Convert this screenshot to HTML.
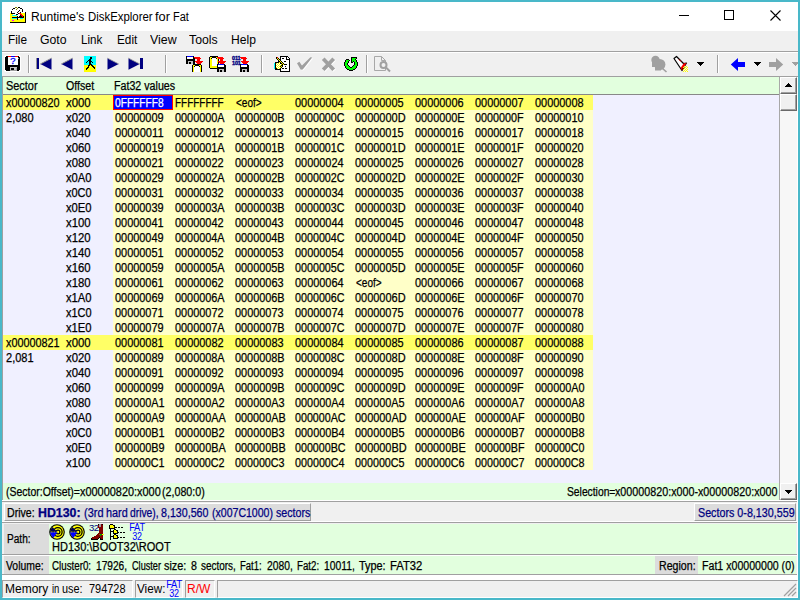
<!DOCTYPE html>
<html><head><meta charset="utf-8"><title>Runtime's DiskExplorer for Fat</title>
<style>
html,body{margin:0;padding:0;}
body{width:800px;height:600px;overflow:hidden;background:#49b8c9;position:relative;font-family:"Liberation Sans",sans-serif;}
.abs,.t,.s{position:absolute;}
.t{-webkit-text-stroke:.25px;font-size:12px;line-height:15px;height:15px;white-space:nowrap;color:#000;transform:scaleX(.915);transform-origin:0 0;}
.s{font-size:12px;line-height:16px;white-space:nowrap;color:#000;}
.navy{color:#000080;}
svg{position:absolute;overflow:visible;}
</style></head><body>

<div class="abs" style="left:2px;top:2px;width:796px;height:596px;background:#f0f0f0;"></div>
<div class="abs" style="left:2px;top:2px;width:796px;height:29px;background:#ffffff;"></div>
<div class="s" style="left:31.3px;top:8.5px;transform:scaleX(1.008);transform-origin:0 0;font-size:12px;">Runtime's</div>
<div class="s" style="left:87.6px;top:8.5px;transform:scaleX(0.950);transform-origin:0 0;font-size:12px;">DiskExplorer</div>
<div class="s" style="left:154.9px;top:8.5px;transform:scaleX(1.064);transform-origin:0 0;font-size:12px;">for</div>
<div class="s" style="left:173.0px;top:8.5px;transform:scaleX(0.917);transform-origin:0 0;font-size:12px;">Fat</div>
<div class="s" style="left:8.3px;top:32.4px;transform:scaleX(0.982);transform-origin:0 0;font-size:12px;">File</div>
<div class="s" style="left:40.2px;top:32.4px;transform:scaleX(1.022);transform-origin:0 0;font-size:12px;">Goto</div>
<div class="s" style="left:81.0px;top:32.4px;transform:scaleX(0.967);transform-origin:0 0;font-size:12px;">Link</div>
<div class="s" style="left:117.0px;top:32.4px;transform:scaleX(0.981);transform-origin:0 0;font-size:12px;">Edit</div>
<div class="s" style="left:149.7px;top:32.4px;transform:scaleX(1.031);transform-origin:0 0;font-size:12px;">View</div>
<div class="s" style="left:188.7px;top:32.4px;transform:scaleX(1.021);transform-origin:0 0;font-size:12px;">Tools</div>
<div class="s" style="left:231.4px;top:32.4px;transform:scaleX(1.009);transform-origin:0 0;font-size:12px;">Help</div>
<div class="abs" style="left:2px;top:51px;width:796px;height:1px;background:#a0a0a0;"></div>
<div class="abs" style="left:2px;top:52px;width:796px;height:1px;background:#ffffff;"></div>
<div class="abs" style="left:2px;top:76px;width:796px;height:1px;background:#a0a0a0;"></div>
<div class="abs" style="left:2px;top:77px;width:1px;height:424px;background:#a0a0a0;"></div>
<div class="abs" style="left:3px;top:77px;width:776px;height:17px;background:#e2ffde;"></div>
<div class="abs" style="left:3px;top:94px;width:776px;height:1px;background:#888888;"></div>
<div class="abs" style="left:3px;top:95px;width:776px;height:388px;background:#f0f0ff;"></div>
<div class="abs" style="left:113px;top:95px;width:480px;height:375px;background:#ffffc8;"></div>
<div class="abs" style="left:3px;top:95px;width:590px;height:15px;background:#ffff66;"></div>
<div class="abs" style="left:3px;top:335px;width:590px;height:15px;background:#ffff66;"></div>
<div class="abs" style="left:3px;top:483px;width:776px;height:17px;background:#e2ffde;"></div>
<div class="abs" style="left:2px;top:500px;width:796px;height:1px;background:#ffffff;"></div>
<div class="t" style="left:5.7px;top:79px;transform:scaleX(0.911);transform-origin:0 0;font-size:12px;">Sector</div>
<div class="t" style="left:65.7px;top:79px;transform:scaleX(0.884);transform-origin:0 0;font-size:12px;">Offset</div>
<div class="t" style="left:113.7px;top:79px;transform:scaleX(0.889);transform-origin:0 0;font-size:12px;">Fat32 values</div>
<div class="abs" style="left:113px;top:95px;width:60px;height:15px;background:#0000ff;box-sizing:border-box;border:1px solid #ff0000;"></div>
<div class="t" style="left:65.7px;top:96px;transform:scaleX(0.945);transform-origin:0 0;font-size:12px;">x000</div>
<div class="t" style="left:5.7px;top:96px;transform:scaleX(0.902);transform-origin:0 0;font-size:12px;">x00000820</div>
<div class="t" style="left:114.7px;top:96px;transform:scaleX(0.848);transform-origin:0 0;font-size:12px;color:#fff;">0FFFFFF8</div>
<div class="t" style="left:174.7px;top:96px;transform:scaleX(0.829);transform-origin:0 0;font-size:12px;">FFFFFFFF</div>
<div class="t" style="left:235.7px;top:96px;transform:scaleX(0.834);transform-origin:0 0;font-size:12px;">&lt;eof&gt;</div>
<div class="t" style="left:294.7px;top:96px;transform:scaleX(0.910);transform-origin:0 0;font-size:12px;">00000004</div>
<div class="t" style="left:354.7px;top:96px;transform:scaleX(0.910);transform-origin:0 0;font-size:12px;">00000005</div>
<div class="t" style="left:414.7px;top:96px;transform:scaleX(0.910);transform-origin:0 0;font-size:12px;">00000006</div>
<div class="t" style="left:474.7px;top:96px;transform:scaleX(0.910);transform-origin:0 0;font-size:12px;">00000007</div>
<div class="t" style="left:534.7px;top:96px;transform:scaleX(0.910);transform-origin:0 0;font-size:12px;">00000008</div>
<div class="t" style="left:65.7px;top:111px;transform:scaleX(0.945);transform-origin:0 0;font-size:12px;">x020</div>
<div class="t" style="left:5.7px;top:111px;transform:scaleX(0.919);transform-origin:0 0;font-size:12px;">2,080</div>
<div class="t" style="left:114.7px;top:111px;transform:scaleX(0.910);transform-origin:0 0;font-size:12px;">00000009</div>
<div class="t" style="left:174.7px;top:111px;transform:scaleX(0.906);transform-origin:0 0;font-size:12px;">0000000A</div>
<div class="t" style="left:234.7px;top:111px;transform:scaleX(0.906);transform-origin:0 0;font-size:12px;">0000000B</div>
<div class="t" style="left:294.7px;top:111px;transform:scaleX(0.895);transform-origin:0 0;font-size:12px;">0000000C</div>
<div class="t" style="left:354.7px;top:111px;transform:scaleX(0.913);transform-origin:0 0;font-size:12px;">0000000D</div>
<div class="t" style="left:414.7px;top:111px;transform:scaleX(0.906);transform-origin:0 0;font-size:12px;">0000000E</div>
<div class="t" style="left:474.7px;top:111px;transform:scaleX(0.899);transform-origin:0 0;font-size:12px;">0000000F</div>
<div class="t" style="left:534.7px;top:111px;transform:scaleX(0.910);transform-origin:0 0;font-size:12px;">00000010</div>
<div class="t" style="left:65.7px;top:126px;transform:scaleX(0.945);transform-origin:0 0;font-size:12px;">x040</div>
<div class="t" style="left:114.7px;top:126px;transform:scaleX(0.925);transform-origin:0 0;font-size:12px;">00000011</div>
<div class="t" style="left:174.7px;top:126px;transform:scaleX(0.910);transform-origin:0 0;font-size:12px;">00000012</div>
<div class="t" style="left:234.7px;top:126px;transform:scaleX(0.910);transform-origin:0 0;font-size:12px;">00000013</div>
<div class="t" style="left:294.7px;top:126px;transform:scaleX(0.910);transform-origin:0 0;font-size:12px;">00000014</div>
<div class="t" style="left:354.7px;top:126px;transform:scaleX(0.910);transform-origin:0 0;font-size:12px;">00000015</div>
<div class="t" style="left:414.7px;top:126px;transform:scaleX(0.910);transform-origin:0 0;font-size:12px;">00000016</div>
<div class="t" style="left:474.7px;top:126px;transform:scaleX(0.910);transform-origin:0 0;font-size:12px;">00000017</div>
<div class="t" style="left:534.7px;top:126px;transform:scaleX(0.910);transform-origin:0 0;font-size:12px;">00000018</div>
<div class="t" style="left:65.7px;top:141px;transform:scaleX(0.945);transform-origin:0 0;font-size:12px;">x060</div>
<div class="t" style="left:114.7px;top:141px;transform:scaleX(0.910);transform-origin:0 0;font-size:12px;">00000019</div>
<div class="t" style="left:174.7px;top:141px;transform:scaleX(0.906);transform-origin:0 0;font-size:12px;">0000001A</div>
<div class="t" style="left:234.7px;top:141px;transform:scaleX(0.906);transform-origin:0 0;font-size:12px;">0000001B</div>
<div class="t" style="left:294.7px;top:141px;transform:scaleX(0.895);transform-origin:0 0;font-size:12px;">0000001C</div>
<div class="t" style="left:354.7px;top:141px;transform:scaleX(0.913);transform-origin:0 0;font-size:12px;">0000001D</div>
<div class="t" style="left:414.7px;top:141px;transform:scaleX(0.906);transform-origin:0 0;font-size:12px;">0000001E</div>
<div class="t" style="left:474.7px;top:141px;transform:scaleX(0.899);transform-origin:0 0;font-size:12px;">0000001F</div>
<div class="t" style="left:534.7px;top:141px;transform:scaleX(0.910);transform-origin:0 0;font-size:12px;">00000020</div>
<div class="t" style="left:65.7px;top:156px;transform:scaleX(0.945);transform-origin:0 0;font-size:12px;">x080</div>
<div class="t" style="left:114.7px;top:156px;transform:scaleX(0.910);transform-origin:0 0;font-size:12px;">00000021</div>
<div class="t" style="left:174.7px;top:156px;transform:scaleX(0.910);transform-origin:0 0;font-size:12px;">00000022</div>
<div class="t" style="left:234.7px;top:156px;transform:scaleX(0.910);transform-origin:0 0;font-size:12px;">00000023</div>
<div class="t" style="left:294.7px;top:156px;transform:scaleX(0.910);transform-origin:0 0;font-size:12px;">00000024</div>
<div class="t" style="left:354.7px;top:156px;transform:scaleX(0.910);transform-origin:0 0;font-size:12px;">00000025</div>
<div class="t" style="left:414.7px;top:156px;transform:scaleX(0.910);transform-origin:0 0;font-size:12px;">00000026</div>
<div class="t" style="left:474.7px;top:156px;transform:scaleX(0.910);transform-origin:0 0;font-size:12px;">00000027</div>
<div class="t" style="left:534.7px;top:156px;transform:scaleX(0.910);transform-origin:0 0;font-size:12px;">00000028</div>
<div class="t" style="left:65.7px;top:171px;transform:scaleX(0.936);transform-origin:0 0;font-size:12px;">x0A0</div>
<div class="t" style="left:114.7px;top:171px;transform:scaleX(0.910);transform-origin:0 0;font-size:12px;">00000029</div>
<div class="t" style="left:174.7px;top:171px;transform:scaleX(0.906);transform-origin:0 0;font-size:12px;">0000002A</div>
<div class="t" style="left:234.7px;top:171px;transform:scaleX(0.906);transform-origin:0 0;font-size:12px;">0000002B</div>
<div class="t" style="left:294.7px;top:171px;transform:scaleX(0.895);transform-origin:0 0;font-size:12px;">0000002C</div>
<div class="t" style="left:354.7px;top:171px;transform:scaleX(0.913);transform-origin:0 0;font-size:12px;">0000002D</div>
<div class="t" style="left:414.7px;top:171px;transform:scaleX(0.906);transform-origin:0 0;font-size:12px;">0000002E</div>
<div class="t" style="left:474.7px;top:171px;transform:scaleX(0.899);transform-origin:0 0;font-size:12px;">0000002F</div>
<div class="t" style="left:534.7px;top:171px;transform:scaleX(0.910);transform-origin:0 0;font-size:12px;">00000030</div>
<div class="t" style="left:65.7px;top:186px;transform:scaleX(0.914);transform-origin:0 0;font-size:12px;">x0C0</div>
<div class="t" style="left:114.7px;top:186px;transform:scaleX(0.910);transform-origin:0 0;font-size:12px;">00000031</div>
<div class="t" style="left:174.7px;top:186px;transform:scaleX(0.910);transform-origin:0 0;font-size:12px;">00000032</div>
<div class="t" style="left:234.7px;top:186px;transform:scaleX(0.910);transform-origin:0 0;font-size:12px;">00000033</div>
<div class="t" style="left:294.7px;top:186px;transform:scaleX(0.910);transform-origin:0 0;font-size:12px;">00000034</div>
<div class="t" style="left:354.7px;top:186px;transform:scaleX(0.910);transform-origin:0 0;font-size:12px;">00000035</div>
<div class="t" style="left:414.7px;top:186px;transform:scaleX(0.910);transform-origin:0 0;font-size:12px;">00000036</div>
<div class="t" style="left:474.7px;top:186px;transform:scaleX(0.910);transform-origin:0 0;font-size:12px;">00000037</div>
<div class="t" style="left:534.7px;top:186px;transform:scaleX(0.910);transform-origin:0 0;font-size:12px;">00000038</div>
<div class="t" style="left:65.7px;top:201px;transform:scaleX(0.936);transform-origin:0 0;font-size:12px;">x0E0</div>
<div class="t" style="left:114.7px;top:201px;transform:scaleX(0.910);transform-origin:0 0;font-size:12px;">00000039</div>
<div class="t" style="left:174.7px;top:201px;transform:scaleX(0.906);transform-origin:0 0;font-size:12px;">0000003A</div>
<div class="t" style="left:234.7px;top:201px;transform:scaleX(0.906);transform-origin:0 0;font-size:12px;">0000003B</div>
<div class="t" style="left:294.7px;top:201px;transform:scaleX(0.895);transform-origin:0 0;font-size:12px;">0000003C</div>
<div class="t" style="left:354.7px;top:201px;transform:scaleX(0.913);transform-origin:0 0;font-size:12px;">0000003D</div>
<div class="t" style="left:414.7px;top:201px;transform:scaleX(0.906);transform-origin:0 0;font-size:12px;">0000003E</div>
<div class="t" style="left:474.7px;top:201px;transform:scaleX(0.899);transform-origin:0 0;font-size:12px;">0000003F</div>
<div class="t" style="left:534.7px;top:201px;transform:scaleX(0.910);transform-origin:0 0;font-size:12px;">00000040</div>
<div class="t" style="left:65.7px;top:216px;transform:scaleX(0.945);transform-origin:0 0;font-size:12px;">x100</div>
<div class="t" style="left:114.7px;top:216px;transform:scaleX(0.910);transform-origin:0 0;font-size:12px;">00000041</div>
<div class="t" style="left:174.7px;top:216px;transform:scaleX(0.910);transform-origin:0 0;font-size:12px;">00000042</div>
<div class="t" style="left:234.7px;top:216px;transform:scaleX(0.910);transform-origin:0 0;font-size:12px;">00000043</div>
<div class="t" style="left:294.7px;top:216px;transform:scaleX(0.910);transform-origin:0 0;font-size:12px;">00000044</div>
<div class="t" style="left:354.7px;top:216px;transform:scaleX(0.910);transform-origin:0 0;font-size:12px;">00000045</div>
<div class="t" style="left:414.7px;top:216px;transform:scaleX(0.910);transform-origin:0 0;font-size:12px;">00000046</div>
<div class="t" style="left:474.7px;top:216px;transform:scaleX(0.910);transform-origin:0 0;font-size:12px;">00000047</div>
<div class="t" style="left:534.7px;top:216px;transform:scaleX(0.910);transform-origin:0 0;font-size:12px;">00000048</div>
<div class="t" style="left:65.7px;top:231px;transform:scaleX(0.945);transform-origin:0 0;font-size:12px;">x120</div>
<div class="t" style="left:114.7px;top:231px;transform:scaleX(0.910);transform-origin:0 0;font-size:12px;">00000049</div>
<div class="t" style="left:174.7px;top:231px;transform:scaleX(0.906);transform-origin:0 0;font-size:12px;">0000004A</div>
<div class="t" style="left:234.7px;top:231px;transform:scaleX(0.906);transform-origin:0 0;font-size:12px;">0000004B</div>
<div class="t" style="left:294.7px;top:231px;transform:scaleX(0.895);transform-origin:0 0;font-size:12px;">0000004C</div>
<div class="t" style="left:354.7px;top:231px;transform:scaleX(0.913);transform-origin:0 0;font-size:12px;">0000004D</div>
<div class="t" style="left:414.7px;top:231px;transform:scaleX(0.906);transform-origin:0 0;font-size:12px;">0000004E</div>
<div class="t" style="left:474.7px;top:231px;transform:scaleX(0.899);transform-origin:0 0;font-size:12px;">0000004F</div>
<div class="t" style="left:534.7px;top:231px;transform:scaleX(0.910);transform-origin:0 0;font-size:12px;">00000050</div>
<div class="t" style="left:65.7px;top:246px;transform:scaleX(0.945);transform-origin:0 0;font-size:12px;">x140</div>
<div class="t" style="left:114.7px;top:246px;transform:scaleX(0.910);transform-origin:0 0;font-size:12px;">00000051</div>
<div class="t" style="left:174.7px;top:246px;transform:scaleX(0.910);transform-origin:0 0;font-size:12px;">00000052</div>
<div class="t" style="left:234.7px;top:246px;transform:scaleX(0.910);transform-origin:0 0;font-size:12px;">00000053</div>
<div class="t" style="left:294.7px;top:246px;transform:scaleX(0.910);transform-origin:0 0;font-size:12px;">00000054</div>
<div class="t" style="left:354.7px;top:246px;transform:scaleX(0.910);transform-origin:0 0;font-size:12px;">00000055</div>
<div class="t" style="left:414.7px;top:246px;transform:scaleX(0.910);transform-origin:0 0;font-size:12px;">00000056</div>
<div class="t" style="left:474.7px;top:246px;transform:scaleX(0.910);transform-origin:0 0;font-size:12px;">00000057</div>
<div class="t" style="left:534.7px;top:246px;transform:scaleX(0.910);transform-origin:0 0;font-size:12px;">00000058</div>
<div class="t" style="left:65.7px;top:261px;transform:scaleX(0.945);transform-origin:0 0;font-size:12px;">x160</div>
<div class="t" style="left:114.7px;top:261px;transform:scaleX(0.910);transform-origin:0 0;font-size:12px;">00000059</div>
<div class="t" style="left:174.7px;top:261px;transform:scaleX(0.906);transform-origin:0 0;font-size:12px;">0000005A</div>
<div class="t" style="left:234.7px;top:261px;transform:scaleX(0.906);transform-origin:0 0;font-size:12px;">0000005B</div>
<div class="t" style="left:294.7px;top:261px;transform:scaleX(0.895);transform-origin:0 0;font-size:12px;">0000005C</div>
<div class="t" style="left:354.7px;top:261px;transform:scaleX(0.913);transform-origin:0 0;font-size:12px;">0000005D</div>
<div class="t" style="left:414.7px;top:261px;transform:scaleX(0.906);transform-origin:0 0;font-size:12px;">0000005E</div>
<div class="t" style="left:474.7px;top:261px;transform:scaleX(0.899);transform-origin:0 0;font-size:12px;">0000005F</div>
<div class="t" style="left:534.7px;top:261px;transform:scaleX(0.910);transform-origin:0 0;font-size:12px;">00000060</div>
<div class="t" style="left:65.7px;top:276px;transform:scaleX(0.945);transform-origin:0 0;font-size:12px;">x180</div>
<div class="t" style="left:114.7px;top:276px;transform:scaleX(0.910);transform-origin:0 0;font-size:12px;">00000061</div>
<div class="t" style="left:174.7px;top:276px;transform:scaleX(0.910);transform-origin:0 0;font-size:12px;">00000062</div>
<div class="t" style="left:234.7px;top:276px;transform:scaleX(0.910);transform-origin:0 0;font-size:12px;">00000063</div>
<div class="t" style="left:294.7px;top:276px;transform:scaleX(0.910);transform-origin:0 0;font-size:12px;">00000064</div>
<div class="t" style="left:355.7px;top:276px;transform:scaleX(0.834);transform-origin:0 0;font-size:12px;">&lt;eof&gt;</div>
<div class="t" style="left:414.7px;top:276px;transform:scaleX(0.910);transform-origin:0 0;font-size:12px;">00000066</div>
<div class="t" style="left:474.7px;top:276px;transform:scaleX(0.910);transform-origin:0 0;font-size:12px;">00000067</div>
<div class="t" style="left:534.7px;top:276px;transform:scaleX(0.910);transform-origin:0 0;font-size:12px;">00000068</div>
<div class="t" style="left:65.7px;top:291px;transform:scaleX(0.936);transform-origin:0 0;font-size:12px;">x1A0</div>
<div class="t" style="left:114.7px;top:291px;transform:scaleX(0.910);transform-origin:0 0;font-size:12px;">00000069</div>
<div class="t" style="left:174.7px;top:291px;transform:scaleX(0.906);transform-origin:0 0;font-size:12px;">0000006A</div>
<div class="t" style="left:234.7px;top:291px;transform:scaleX(0.906);transform-origin:0 0;font-size:12px;">0000006B</div>
<div class="t" style="left:294.7px;top:291px;transform:scaleX(0.895);transform-origin:0 0;font-size:12px;">0000006C</div>
<div class="t" style="left:354.7px;top:291px;transform:scaleX(0.913);transform-origin:0 0;font-size:12px;">0000006D</div>
<div class="t" style="left:414.7px;top:291px;transform:scaleX(0.906);transform-origin:0 0;font-size:12px;">0000006E</div>
<div class="t" style="left:474.7px;top:291px;transform:scaleX(0.899);transform-origin:0 0;font-size:12px;">0000006F</div>
<div class="t" style="left:534.7px;top:291px;transform:scaleX(0.910);transform-origin:0 0;font-size:12px;">00000070</div>
<div class="t" style="left:65.7px;top:306px;transform:scaleX(0.914);transform-origin:0 0;font-size:12px;">x1C0</div>
<div class="t" style="left:114.7px;top:306px;transform:scaleX(0.910);transform-origin:0 0;font-size:12px;">00000071</div>
<div class="t" style="left:174.7px;top:306px;transform:scaleX(0.910);transform-origin:0 0;font-size:12px;">00000072</div>
<div class="t" style="left:234.7px;top:306px;transform:scaleX(0.910);transform-origin:0 0;font-size:12px;">00000073</div>
<div class="t" style="left:294.7px;top:306px;transform:scaleX(0.910);transform-origin:0 0;font-size:12px;">00000074</div>
<div class="t" style="left:354.7px;top:306px;transform:scaleX(0.910);transform-origin:0 0;font-size:12px;">00000075</div>
<div class="t" style="left:414.7px;top:306px;transform:scaleX(0.910);transform-origin:0 0;font-size:12px;">00000076</div>
<div class="t" style="left:474.7px;top:306px;transform:scaleX(0.910);transform-origin:0 0;font-size:12px;">00000077</div>
<div class="t" style="left:534.7px;top:306px;transform:scaleX(0.910);transform-origin:0 0;font-size:12px;">00000078</div>
<div class="t" style="left:65.7px;top:321px;transform:scaleX(0.936);transform-origin:0 0;font-size:12px;">x1E0</div>
<div class="t" style="left:114.7px;top:321px;transform:scaleX(0.910);transform-origin:0 0;font-size:12px;">00000079</div>
<div class="t" style="left:174.7px;top:321px;transform:scaleX(0.906);transform-origin:0 0;font-size:12px;">0000007A</div>
<div class="t" style="left:234.7px;top:321px;transform:scaleX(0.906);transform-origin:0 0;font-size:12px;">0000007B</div>
<div class="t" style="left:294.7px;top:321px;transform:scaleX(0.895);transform-origin:0 0;font-size:12px;">0000007C</div>
<div class="t" style="left:354.7px;top:321px;transform:scaleX(0.913);transform-origin:0 0;font-size:12px;">0000007D</div>
<div class="t" style="left:414.7px;top:321px;transform:scaleX(0.906);transform-origin:0 0;font-size:12px;">0000007E</div>
<div class="t" style="left:474.7px;top:321px;transform:scaleX(0.899);transform-origin:0 0;font-size:12px;">0000007F</div>
<div class="t" style="left:534.7px;top:321px;transform:scaleX(0.910);transform-origin:0 0;font-size:12px;">00000080</div>
<div class="t" style="left:65.7px;top:336px;transform:scaleX(0.945);transform-origin:0 0;font-size:12px;">x000</div>
<div class="t" style="left:5.7px;top:336px;transform:scaleX(0.902);transform-origin:0 0;font-size:12px;">x00000821</div>
<div class="t" style="left:114.7px;top:336px;transform:scaleX(0.910);transform-origin:0 0;font-size:12px;">00000081</div>
<div class="t" style="left:174.7px;top:336px;transform:scaleX(0.910);transform-origin:0 0;font-size:12px;">00000082</div>
<div class="t" style="left:234.7px;top:336px;transform:scaleX(0.910);transform-origin:0 0;font-size:12px;">00000083</div>
<div class="t" style="left:294.7px;top:336px;transform:scaleX(0.910);transform-origin:0 0;font-size:12px;">00000084</div>
<div class="t" style="left:354.7px;top:336px;transform:scaleX(0.910);transform-origin:0 0;font-size:12px;">00000085</div>
<div class="t" style="left:414.7px;top:336px;transform:scaleX(0.910);transform-origin:0 0;font-size:12px;">00000086</div>
<div class="t" style="left:474.7px;top:336px;transform:scaleX(0.910);transform-origin:0 0;font-size:12px;">00000087</div>
<div class="t" style="left:534.7px;top:336px;transform:scaleX(0.910);transform-origin:0 0;font-size:12px;">00000088</div>
<div class="t" style="left:65.7px;top:351px;transform:scaleX(0.945);transform-origin:0 0;font-size:12px;">x020</div>
<div class="t" style="left:5.7px;top:351px;transform:scaleX(0.919);transform-origin:0 0;font-size:12px;">2,081</div>
<div class="t" style="left:114.7px;top:351px;transform:scaleX(0.910);transform-origin:0 0;font-size:12px;">00000089</div>
<div class="t" style="left:174.7px;top:351px;transform:scaleX(0.906);transform-origin:0 0;font-size:12px;">0000008A</div>
<div class="t" style="left:234.7px;top:351px;transform:scaleX(0.906);transform-origin:0 0;font-size:12px;">0000008B</div>
<div class="t" style="left:294.7px;top:351px;transform:scaleX(0.895);transform-origin:0 0;font-size:12px;">0000008C</div>
<div class="t" style="left:354.7px;top:351px;transform:scaleX(0.913);transform-origin:0 0;font-size:12px;">0000008D</div>
<div class="t" style="left:414.7px;top:351px;transform:scaleX(0.906);transform-origin:0 0;font-size:12px;">0000008E</div>
<div class="t" style="left:474.7px;top:351px;transform:scaleX(0.899);transform-origin:0 0;font-size:12px;">0000008F</div>
<div class="t" style="left:534.7px;top:351px;transform:scaleX(0.910);transform-origin:0 0;font-size:12px;">00000090</div>
<div class="t" style="left:65.7px;top:366px;transform:scaleX(0.945);transform-origin:0 0;font-size:12px;">x040</div>
<div class="t" style="left:114.7px;top:366px;transform:scaleX(0.910);transform-origin:0 0;font-size:12px;">00000091</div>
<div class="t" style="left:174.7px;top:366px;transform:scaleX(0.910);transform-origin:0 0;font-size:12px;">00000092</div>
<div class="t" style="left:234.7px;top:366px;transform:scaleX(0.910);transform-origin:0 0;font-size:12px;">00000093</div>
<div class="t" style="left:294.7px;top:366px;transform:scaleX(0.910);transform-origin:0 0;font-size:12px;">00000094</div>
<div class="t" style="left:354.7px;top:366px;transform:scaleX(0.910);transform-origin:0 0;font-size:12px;">00000095</div>
<div class="t" style="left:414.7px;top:366px;transform:scaleX(0.910);transform-origin:0 0;font-size:12px;">00000096</div>
<div class="t" style="left:474.7px;top:366px;transform:scaleX(0.910);transform-origin:0 0;font-size:12px;">00000097</div>
<div class="t" style="left:534.7px;top:366px;transform:scaleX(0.910);transform-origin:0 0;font-size:12px;">00000098</div>
<div class="t" style="left:65.7px;top:381px;transform:scaleX(0.945);transform-origin:0 0;font-size:12px;">x060</div>
<div class="t" style="left:114.7px;top:381px;transform:scaleX(0.910);transform-origin:0 0;font-size:12px;">00000099</div>
<div class="t" style="left:174.7px;top:381px;transform:scaleX(0.906);transform-origin:0 0;font-size:12px;">0000009A</div>
<div class="t" style="left:234.7px;top:381px;transform:scaleX(0.906);transform-origin:0 0;font-size:12px;">0000009B</div>
<div class="t" style="left:294.7px;top:381px;transform:scaleX(0.895);transform-origin:0 0;font-size:12px;">0000009C</div>
<div class="t" style="left:354.7px;top:381px;transform:scaleX(0.913);transform-origin:0 0;font-size:12px;">0000009D</div>
<div class="t" style="left:414.7px;top:381px;transform:scaleX(0.906);transform-origin:0 0;font-size:12px;">0000009E</div>
<div class="t" style="left:474.7px;top:381px;transform:scaleX(0.899);transform-origin:0 0;font-size:12px;">0000009F</div>
<div class="t" style="left:534.7px;top:381px;transform:scaleX(0.906);transform-origin:0 0;font-size:12px;">000000A0</div>
<div class="t" style="left:65.7px;top:396px;transform:scaleX(0.945);transform-origin:0 0;font-size:12px;">x080</div>
<div class="t" style="left:114.7px;top:396px;transform:scaleX(0.906);transform-origin:0 0;font-size:12px;">000000A1</div>
<div class="t" style="left:174.7px;top:396px;transform:scaleX(0.906);transform-origin:0 0;font-size:12px;">000000A2</div>
<div class="t" style="left:234.7px;top:396px;transform:scaleX(0.906);transform-origin:0 0;font-size:12px;">000000A3</div>
<div class="t" style="left:294.7px;top:396px;transform:scaleX(0.906);transform-origin:0 0;font-size:12px;">000000A4</div>
<div class="t" style="left:354.7px;top:396px;transform:scaleX(0.906);transform-origin:0 0;font-size:12px;">000000A5</div>
<div class="t" style="left:414.7px;top:396px;transform:scaleX(0.906);transform-origin:0 0;font-size:12px;">000000A6</div>
<div class="t" style="left:474.7px;top:396px;transform:scaleX(0.906);transform-origin:0 0;font-size:12px;">000000A7</div>
<div class="t" style="left:534.7px;top:396px;transform:scaleX(0.906);transform-origin:0 0;font-size:12px;">000000A8</div>
<div class="t" style="left:65.7px;top:411px;transform:scaleX(0.936);transform-origin:0 0;font-size:12px;">x0A0</div>
<div class="t" style="left:114.7px;top:411px;transform:scaleX(0.906);transform-origin:0 0;font-size:12px;">000000A9</div>
<div class="t" style="left:174.7px;top:411px;transform:scaleX(0.903);transform-origin:0 0;font-size:12px;">000000AA</div>
<div class="t" style="left:234.7px;top:411px;transform:scaleX(0.903);transform-origin:0 0;font-size:12px;">000000AB</div>
<div class="t" style="left:294.7px;top:411px;transform:scaleX(0.892);transform-origin:0 0;font-size:12px;">000000AC</div>
<div class="t" style="left:354.7px;top:411px;transform:scaleX(0.910);transform-origin:0 0;font-size:12px;">000000AD</div>
<div class="t" style="left:414.7px;top:411px;transform:scaleX(0.903);transform-origin:0 0;font-size:12px;">000000AE</div>
<div class="t" style="left:474.7px;top:411px;transform:scaleX(0.895);transform-origin:0 0;font-size:12px;">000000AF</div>
<div class="t" style="left:534.7px;top:411px;transform:scaleX(0.906);transform-origin:0 0;font-size:12px;">000000B0</div>
<div class="t" style="left:65.7px;top:426px;transform:scaleX(0.914);transform-origin:0 0;font-size:12px;">x0C0</div>
<div class="t" style="left:114.7px;top:426px;transform:scaleX(0.906);transform-origin:0 0;font-size:12px;">000000B1</div>
<div class="t" style="left:174.7px;top:426px;transform:scaleX(0.906);transform-origin:0 0;font-size:12px;">000000B2</div>
<div class="t" style="left:234.7px;top:426px;transform:scaleX(0.906);transform-origin:0 0;font-size:12px;">000000B3</div>
<div class="t" style="left:294.7px;top:426px;transform:scaleX(0.906);transform-origin:0 0;font-size:12px;">000000B4</div>
<div class="t" style="left:354.7px;top:426px;transform:scaleX(0.906);transform-origin:0 0;font-size:12px;">000000B5</div>
<div class="t" style="left:414.7px;top:426px;transform:scaleX(0.906);transform-origin:0 0;font-size:12px;">000000B6</div>
<div class="t" style="left:474.7px;top:426px;transform:scaleX(0.906);transform-origin:0 0;font-size:12px;">000000B7</div>
<div class="t" style="left:534.7px;top:426px;transform:scaleX(0.906);transform-origin:0 0;font-size:12px;">000000B8</div>
<div class="t" style="left:65.7px;top:441px;transform:scaleX(0.936);transform-origin:0 0;font-size:12px;">x0E0</div>
<div class="t" style="left:114.7px;top:441px;transform:scaleX(0.906);transform-origin:0 0;font-size:12px;">000000B9</div>
<div class="t" style="left:174.7px;top:441px;transform:scaleX(0.903);transform-origin:0 0;font-size:12px;">000000BA</div>
<div class="t" style="left:234.7px;top:441px;transform:scaleX(0.903);transform-origin:0 0;font-size:12px;">000000BB</div>
<div class="t" style="left:294.7px;top:441px;transform:scaleX(0.892);transform-origin:0 0;font-size:12px;">000000BC</div>
<div class="t" style="left:354.7px;top:441px;transform:scaleX(0.910);transform-origin:0 0;font-size:12px;">000000BD</div>
<div class="t" style="left:414.7px;top:441px;transform:scaleX(0.903);transform-origin:0 0;font-size:12px;">000000BE</div>
<div class="t" style="left:474.7px;top:441px;transform:scaleX(0.895);transform-origin:0 0;font-size:12px;">000000BF</div>
<div class="t" style="left:534.7px;top:441px;transform:scaleX(0.895);transform-origin:0 0;font-size:12px;">000000C0</div>
<div class="t" style="left:65.7px;top:456px;transform:scaleX(0.945);transform-origin:0 0;font-size:12px;">x100</div>
<div class="t" style="left:114.7px;top:456px;transform:scaleX(0.895);transform-origin:0 0;font-size:12px;">000000C1</div>
<div class="t" style="left:174.7px;top:456px;transform:scaleX(0.895);transform-origin:0 0;font-size:12px;">000000C2</div>
<div class="t" style="left:234.7px;top:456px;transform:scaleX(0.895);transform-origin:0 0;font-size:12px;">000000C3</div>
<div class="t" style="left:294.7px;top:456px;transform:scaleX(0.895);transform-origin:0 0;font-size:12px;">000000C4</div>
<div class="t" style="left:354.7px;top:456px;transform:scaleX(0.895);transform-origin:0 0;font-size:12px;">000000C5</div>
<div class="t" style="left:414.7px;top:456px;transform:scaleX(0.895);transform-origin:0 0;font-size:12px;">000000C6</div>
<div class="t" style="left:474.7px;top:456px;transform:scaleX(0.895);transform-origin:0 0;font-size:12px;">000000C7</div>
<div class="t" style="left:534.7px;top:456px;transform:scaleX(0.895);transform-origin:0 0;font-size:12px;">000000C8</div>
<div class="t" style="left:5.7px;top:485px;transform:scaleX(0.872);transform-origin:0 0;font-size:12px;">(Sector:Offset)=</div>
<div class="t" style="left:79.5px;top:485px;transform:scaleX(0.910);transform-origin:0 0;font-size:12px;">x00000820:x000</div>
<div class="t" style="left:162.0px;top:485px;transform:scaleX(0.891);transform-origin:0 0;font-size:12px;">(2,080:0)</div>
<div class="t" style="left:566.9px;top:485px;transform:scaleX(0.858);transform-origin:0 0;font-size:12px;">Selection=</div>
<div class="t" style="left:615.3px;top:485px;transform:scaleX(0.895);transform-origin:0 0;font-size:12px;">x00000820:x000-x00000820:x000</div>
<div class="abs" style="left:779px;top:77px;width:1px;height:423px;background:#a8a8a8;"></div>
<div class="abs" style="left:780px;top:77px;width:17px;height:423px;background:#f7f7f7;"></div>
<div class="abs" style="left:780px;top:77px;width:17px;height:17px;background:#f0f0f0;box-sizing:border-box;border:1px solid;border-color:#fff #696969 #696969 #fff;box-shadow:inset -1px -1px 0 #a0a0a0;"></div>
<div class="abs" style="left:780px;top:94px;width:17px;height:17px;background:#f0f0f0;box-sizing:border-box;border:1px solid;border-color:#fff #696969 #696969 #fff;box-shadow:inset -1px -1px 0 #a0a0a0;"></div>
<div class="abs" style="left:780px;top:483px;width:17px;height:17px;background:#f0f0f0;box-sizing:border-box;border:1px solid;border-color:#fff #696969 #696969 #fff;box-shadow:inset -1px -1px 0 #a0a0a0;"></div>
<svg style="left:785px;top:83px" width="7" height="4" viewBox="0 0 7 4" shape-rendering="crispEdges"><path d="M3 0h1v1h1v1h1v1h1v1h-7v-1h1v-1h1v-1h1z" fill="#000"/></svg>
<svg style="left:785px;top:490px" width="7" height="4" viewBox="0 0 7 4" shape-rendering="crispEdges"><path d="M0 0h7v1h-1v1h-1v1h-1v1h-1v-1h-1v-1h-1v-1h-1z" fill="#000"/></svg>
<div class="abs" style="left:797px;top:77px;width:1px;height:521px;background:#ffffff;"></div>
<div class="abs" style="left:2px;top:501px;width:795px;height:1px;background:#a0a0a0;"></div>
<div class="abs" style="left:4px;top:503px;width:307px;height:18px;background:#dcdcdc;box-sizing:border-box;border:1px solid;border-color:#fff #a0a0a0 #a0a0a0 #fff;"></div>
<div class="t" style="left:6.7px;top:506px;transform:scaleX(0.881);transform-origin:0 0;font-size:12px;">Drive:</div>
<div class="t" style="left:37.7px;top:506px;transform:scaleX(1.030);transform-origin:0 0;font-size:12px;font-weight:bold;color:#000080;">HD130:</div>
<div class="t" style="left:84.3px;top:506px;transform:scaleX(0.914);transform-origin:0 0;font-size:12px;color:#000080;">(3rd</div>
<div class="t" style="left:106.1px;top:506px;transform:scaleX(0.903);transform-origin:0 0;font-size:12px;color:#000080;">hard</div>
<div class="t" style="left:130.1px;top:506px;transform:scaleX(0.858);transform-origin:0 0;font-size:12px;color:#000080;">drive),</div>
<div class="t" style="left:161.3px;top:506px;transform:scaleX(0.889);transform-origin:0 0;font-size:12px;color:#000080;">8,130,560</div>
<div class="t" style="left:211.7px;top:506px;transform:scaleX(0.879);transform-origin:0 0;font-size:12px;color:#000080;">(x007C1000)</div>
<div class="t" style="left:276.2px;top:506px;transform:scaleX(0.889);transform-origin:0 0;font-size:12px;color:#000080;">sectors</div>
<div class="abs" style="left:694px;top:503px;width:102px;height:18px;background:#dcdcdc;box-sizing:border-box;border:1px solid;border-color:#fff #a0a0a0 #a0a0a0 #fff;"></div>
<div class="t" style="left:697.7px;top:506px;transform:scaleX(0.894);transform-origin:0 0;font-size:12px;color:#000080;">Sectors 0-8,130,559</div>
<div class="abs" style="left:2px;top:521px;width:795px;height:1px;background:#ffffff;"></div>
<div class="abs" style="left:2px;top:522px;width:795px;height:1px;background:#a0a0a0;"></div>
<div class="abs" style="left:4px;top:524px;width:792px;height:30px;background:#e2ffde;"></div>
<div class="abs" style="left:4px;top:524px;width:45px;height:30px;background:#dcdcdc;"></div>
<div class="t" style="left:6.7px;top:532px;transform:scaleX(0.842);transform-origin:0 0;font-size:12px;">Path:</div>
<div class="t" style="left:51.7px;top:540px;transform:scaleX(0.917);transform-origin:0 0;font-size:12px;">HD130:\BOOT32\ROOT</div>
<div class="abs" style="left:2px;top:554px;width:795px;height:1px;background:#a0a0a0;"></div>
<div class="abs" style="left:2px;top:555px;width:795px;height:1px;background:#ffffff;"></div>
<div class="abs" style="left:4px;top:556px;width:792px;height:18px;background:#e2ffde;"></div>
<div class="abs" style="left:4px;top:556px;width:45px;height:18px;background:#dcdcdc;"></div>
<div class="t" style="left:6.2px;top:559px;transform:scaleX(0.867);transform-origin:0 0;font-size:12px;">Volume:</div>
<div class="t" style="left:52.2px;top:559px;transform:scaleX(0.814);transform-origin:0 0;font-size:12px;">Cluster0:</div>
<div class="t" style="left:95.7px;top:559px;transform:scaleX(0.847);transform-origin:0 0;font-size:12px;">17926,</div>
<div class="t" style="left:131.5px;top:559px;transform:scaleX(0.763);transform-origin:0 0;font-size:12px;">Cluster</div>
<div class="t" style="left:164.0px;top:559px;transform:scaleX(0.904);transform-origin:0 0;font-size:12px;">size:</div>
<div class="t" style="left:191.2px;top:559px;transform:scaleX(0.884);transform-origin:0 0;font-size:12px;">8</div>
<div class="t" style="left:200.7px;top:559px;transform:scaleX(0.828);transform-origin:0 0;font-size:12px;">sectors,</div>
<div class="t" style="left:239.7px;top:559px;transform:scaleX(0.790);transform-origin:0 0;font-size:12px;">Fat1:</div>
<div class="t" style="left:266.7px;top:559px;transform:scaleX(0.859);transform-origin:0 0;font-size:12px;">2080,</div>
<div class="t" style="left:296.7px;top:559px;transform:scaleX(0.808);transform-origin:0 0;font-size:12px;">Fat2:</div>
<div class="t" style="left:324.2px;top:559px;transform:scaleX(0.860);transform-origin:0 0;font-size:12px;">10011,</div>
<div class="t" style="left:359.2px;top:559px;transform:scaleX(0.906);transform-origin:0 0;font-size:12px;">Type:</div>
<div class="t" style="left:390.2px;top:559px;transform:scaleX(0.937);transform-origin:0 0;font-size:12px;">FAT32</div>
<div class="abs" style="left:655px;top:556px;width:43px;height:18px;background:#dcdcdc;"></div>
<div class="t" style="left:658.7px;top:559px;transform:scaleX(0.885);transform-origin:0 0;font-size:12px;">Region:</div>
<div class="t" style="left:701.7px;top:559px;transform:scaleX(0.884);transform-origin:0 0;font-size:12px;">Fat1 x00000000 (0)</div>
<div class="abs" style="left:2px;top:574px;width:795px;height:1px;background:#a0a0a0;"></div>
<div class="abs" style="left:2px;top:575px;width:796px;height:5px;background:#ffffff;"></div>
<div class="abs" style="left:2px;top:580px;width:796px;height:18px;background:#f0f0f0;"></div>
<div class="abs" style="left:2px;top:580px;width:131px;height:18px;background:#f0f0f0;box-sizing:border-box;border:1px solid;border-color:#a0a0a0 #fff #fff #a0a0a0;"></div>
<div class="abs" style="left:135px;top:580px;width:48px;height:18px;background:#f0f0f0;box-sizing:border-box;border:1px solid;border-color:#a0a0a0 #fff #fff #a0a0a0;"></div>
<div class="abs" style="left:185px;top:580px;width:30px;height:18px;background:#f0f0f0;box-sizing:border-box;border:1px solid;border-color:#a0a0a0 #fff #fff #a0a0a0;"></div>
<div class="abs" style="left:217px;top:580px;width:581px;height:18px;background:#f0f0f0;box-sizing:border-box;border:1px solid;border-color:#a0a0a0 #fff #fff #a0a0a0;"></div>
<div class="s" style="left:4.5px;top:581px;transform:scaleX(0.999);transform-origin:0 0;font-size:12px;">Memory</div>
<div class="s" style="left:51.5px;top:581px;transform:scaleX(0.792);transform-origin:0 0;font-size:12px;">in</div>
<div class="s" style="left:62.1px;top:581px;transform:scaleX(0.908);transform-origin:0 0;font-size:12px;">use:</div>
<div class="s" style="left:89.1px;top:581px;transform:scaleX(0.911);transform-origin:0 0;font-size:12px;">794728</div>
<div class="s" style="left:137.2px;top:581px;transform:scaleX(0.975);transform-origin:0 0;font-size:12px;">View:</div>
<div class="s" style="left:187.3px;top:581px;transform:scaleX(1.003);transform-origin:0 0;font-size:12px;color:#ff0000;">R/W</div>
<div class="abs" style="left:164.5px;top:580px;width:18px;font-size:10.5px;line-height:9px;color:#0000ff;text-align:center;letter-spacing:-.2px;transform:scaleX(.88);transform-origin:50% 0;">FAT</div>
<div class="abs" style="left:164.5px;top:588.5px;width:18px;font-size:10px;line-height:9px;color:#0000ff;text-align:center;letter-spacing:-.3px;transform:scaleX(.9);transform-origin:50% 0;">32</div>
<div class="abs" style="left:128px;top:523px;width:18px;font-size:10.5px;line-height:9px;color:#0000ff;text-align:center;letter-spacing:-.2px;transform:scaleX(.88);transform-origin:50% 0;">FAT</div>
<div class="abs" style="left:128px;top:531.5px;width:18px;font-size:10px;line-height:9px;color:#0000ff;text-align:center;letter-spacing:-.3px;transform:scaleX(.9);transform-origin:50% 0;">32</div>
<svg style="left:783px;top:583px" width="14" height="14" viewBox="0 0 14 14"><path d="M13 1L1 13M13 5L5 13M13 9L9 13" stroke="#a0a0a0" stroke-width="1.2" fill="none"/></svg>
<div class="abs" style="left:679px;top:15px;width:10px;height:1px;background:#000;"></div>
<div class="abs" style="left:724px;top:10px;width:10px;height:10px;background:transparent;box-sizing:border-box;border:1px solid #000;"></div>
<svg style="left:770px;top:10px" width="11" height="11" viewBox="0 0 11 11"><path d="M0.5 0.5L10.5 10.5M10.5 0.5L0.5 10.5" stroke="#000" stroke-width="1.1" fill="none"/></svg>
<svg style="left:10px;top:7px" width="16" height="16" viewBox="0 0 16 16" shape-rendering="crispEdges"><rect x="5" y="0" width="2" height="1" fill="#808000"/><rect x="8" y="0" width="2" height="1" fill="#000"/><rect x="3" y="1" width="2" height="1" fill="#000"/><rect x="5" y="1" width="2" height="1" fill="#fff"/><rect x="7" y="1" width="1" height="1" fill="#808000"/><rect x="8" y="1" width="2" height="1" fill="#fff"/><rect x="10" y="1" width="2" height="1" fill="#000"/><rect x="2" y="2" width="1" height="1" fill="#000"/><rect x="3" y="2" width="3" height="1" fill="#fff"/><rect x="6" y="2" width="1" height="1" fill="#808000"/><rect x="7" y="2" width="5" height="1" fill="#fff"/><rect x="12" y="2" width="1" height="1" fill="#000"/><rect x="1" y="3" width="8" height="1" fill="#fff"/><rect x="9" y="3" width="1" height="1" fill="#000"/><rect x="10" y="3" width="2" height="1" fill="#fff"/><rect x="12" y="3" width="1" height="1" fill="#000"/><rect x="1" y="4" width="1" height="1" fill="#000"/><rect x="2" y="4" width="6" height="1" fill="#fff"/><rect x="8" y="4" width="1" height="1" fill="#000"/><rect x="9" y="4" width="3" height="1" fill="#fff"/><rect x="12" y="4" width="1" height="1" fill="#000"/><rect x="1" y="5" width="1" height="1" fill="#000"/><rect x="2" y="5" width="5" height="1" fill="#fff"/><rect x="7" y="5" width="1" height="1" fill="#000"/><rect x="8" y="5" width="2" height="1" fill="#fff"/><rect x="10" y="5" width="1" height="1" fill="#000"/><rect x="15" y="5" width="1" height="1" fill="#000"/><rect x="0" y="6" width="1" height="1" fill="#ffff00"/><rect x="1" y="6" width="4" height="1" fill="#000"/><rect x="5" y="6" width="3" height="1" fill="#fff"/><rect x="8" y="6" width="1" height="1" fill="#000"/><rect x="9" y="6" width="2" height="1" fill="#ff0000"/><rect x="11" y="6" width="4" height="1" fill="#ffff00"/><rect x="15" y="6" width="1" height="1" fill="#000"/><rect x="0" y="7" width="3" height="1" fill="#ffff00"/><rect x="3" y="7" width="3" height="1" fill="#fff"/><rect x="6" y="7" width="2" height="1" fill="#000"/><rect x="8" y="7" width="2" height="1" fill="#fff"/><rect x="10" y="7" width="2" height="1" fill="#ff0000"/><rect x="12" y="7" width="3" height="1" fill="#ffff00"/><rect x="15" y="7" width="1" height="1" fill="#000"/><rect x="0" y="8" width="2" height="1" fill="#ffff00"/><rect x="2" y="8" width="5" height="1" fill="#00ffff"/><rect x="7" y="8" width="3" height="1" fill="#fff"/><rect x="10" y="8" width="1" height="1" fill="#000"/><rect x="11" y="8" width="2" height="1" fill="#ff0000"/><rect x="13" y="8" width="2" height="1" fill="#ffff00"/><rect x="15" y="8" width="1" height="1" fill="#000"/><rect x="0" y="9" width="7" height="1" fill="#ffff00"/><rect x="7" y="9" width="1" height="1" fill="#000"/><rect x="8" y="9" width="1" height="1" fill="#fff"/><rect x="9" y="9" width="3" height="1" fill="#000"/><rect x="12" y="9" width="1" height="1" fill="#ff0000"/><rect x="13" y="9" width="1" height="1" fill="#000"/><rect x="14" y="9" width="1" height="1" fill="#ffff00"/><rect x="15" y="9" width="1" height="1" fill="#000"/><rect x="0" y="10" width="2" height="1" fill="#ffff00"/><rect x="2" y="10" width="12" height="1" fill="#000"/><rect x="14" y="10" width="1" height="1" fill="#ffff00"/><rect x="15" y="10" width="1" height="1" fill="#000"/><rect x="0" y="11" width="2" height="1" fill="#ffff00"/><rect x="2" y="11" width="5" height="1" fill="#00ffff"/><rect x="7" y="11" width="1" height="1" fill="#000"/><rect x="8" y="11" width="2" height="1" fill="#fff"/><rect x="10" y="11" width="3" height="1" fill="#00ffff"/><rect x="13" y="11" width="2" height="1" fill="#ffff00"/><rect x="15" y="11" width="1" height="1" fill="#000"/><rect x="0" y="12" width="7" height="1" fill="#ffff00"/><rect x="7" y="12" width="1" height="1" fill="#000"/><rect x="8" y="12" width="7" height="1" fill="#ffff00"/><rect x="15" y="12" width="1" height="1" fill="#000"/><rect x="0" y="13" width="2" height="1" fill="#ffff00"/><rect x="2" y="13" width="2" height="1" fill="#ff00ff"/><rect x="4" y="13" width="11" height="1" fill="#ffff00"/><rect x="15" y="13" width="1" height="1" fill="#000"/><rect x="0" y="14" width="15" height="1" fill="#ffff00"/><rect x="15" y="14" width="1" height="1" fill="#000"/><rect x="0" y="15" width="16" height="1" fill="#000"/></svg>
<div class="abs" style="left:28px;top:55px;width:1px;height:18px;background:#a0a0a0;"></div>
<div class="abs" style="left:29px;top:55px;width:1px;height:18px;background:#ffffff;"></div>
<div class="abs" style="left:165px;top:55px;width:1px;height:18px;background:#a0a0a0;"></div>
<div class="abs" style="left:166px;top:55px;width:1px;height:18px;background:#ffffff;"></div>
<div class="abs" style="left:261px;top:55px;width:1px;height:18px;background:#a0a0a0;"></div>
<div class="abs" style="left:262px;top:55px;width:1px;height:18px;background:#ffffff;"></div>
<div class="abs" style="left:366px;top:55px;width:1px;height:18px;background:#a0a0a0;"></div>
<div class="abs" style="left:367px;top:55px;width:1px;height:18px;background:#ffffff;"></div>
<div class="abs" style="left:717px;top:55px;width:1px;height:18px;background:#a0a0a0;"></div>
<div class="abs" style="left:718px;top:55px;width:1px;height:18px;background:#ffffff;"></div>
<div class="abs" style="left:4px;top:55px;width:17px;height:17px;background:#fff;border-radius:2px;"></div>
<svg style="left:5px;top:56px" width="15.4" height="15.4" viewBox="0 0 16 16" shape-rendering="crispEdges"><rect x="1" y="0" width="2" height="1" fill="#000"/><rect x="3" y="0" width="3" height="1" fill="#ff0000"/><rect x="6" y="0" width="4" height="1" fill="#0000ff"/><rect x="10" y="0" width="3" height="1" fill="#ff0000"/><rect x="13" y="0" width="2" height="1" fill="#000"/><rect x="0" y="1" width="3" height="1" fill="#000"/><rect x="3" y="1" width="10" height="1" fill="#fff"/><rect x="13" y="1" width="3" height="1" fill="#000"/><rect x="0" y="2" width="3" height="1" fill="#000"/><rect x="3" y="2" width="10" height="1" fill="#fff"/><rect x="13" y="2" width="1" height="1" fill="#000"/><rect x="14" y="2" width="1" height="1" fill="#a0a0a0"/><rect x="15" y="2" width="1" height="1" fill="#000"/><rect x="0" y="3" width="3" height="1" fill="#000"/><rect x="3" y="3" width="10" height="1" fill="#fff"/><rect x="13" y="3" width="3" height="1" fill="#000"/><rect x="0" y="4" width="3" height="1" fill="#000"/><rect x="3" y="4" width="10" height="1" fill="#fff"/><rect x="13" y="4" width="3" height="1" fill="#000"/><rect x="0" y="5" width="3" height="1" fill="#000"/><rect x="3" y="5" width="10" height="1" fill="#fff"/><rect x="13" y="5" width="3" height="1" fill="#000"/><rect x="0" y="6" width="3" height="1" fill="#000"/><rect x="3" y="6" width="10" height="1" fill="#fff"/><rect x="13" y="6" width="3" height="1" fill="#000"/><rect x="0" y="7" width="3" height="1" fill="#000"/><rect x="3" y="7" width="10" height="1" fill="#fff"/><rect x="13" y="7" width="3" height="1" fill="#000"/><rect x="0" y="8" width="3" height="1" fill="#000"/><rect x="3" y="8" width="10" height="1" fill="#fff"/><rect x="13" y="8" width="3" height="1" fill="#000"/><rect x="0" y="9" width="16" height="1" fill="#000"/><rect x="0" y="10" width="16" height="1" fill="#000"/><rect x="0" y="11" width="5" height="1" fill="#000"/><rect x="5" y="11" width="7" height="1" fill="#c0c0c0"/><rect x="12" y="11" width="4" height="1" fill="#000"/><rect x="0" y="12" width="5" height="1" fill="#000"/><rect x="5" y="12" width="1" height="1" fill="#c0c0c0"/><rect x="6" y="12" width="3" height="1" fill="#000"/><rect x="9" y="12" width="2" height="1" fill="#c0c0c0"/><rect x="11" y="12" width="1" height="1" fill="#a0a0a0"/><rect x="12" y="12" width="4" height="1" fill="#000"/><rect x="0" y="13" width="5" height="1" fill="#000"/><rect x="5" y="13" width="1" height="1" fill="#c0c0c0"/><rect x="6" y="13" width="3" height="1" fill="#000"/><rect x="9" y="13" width="2" height="1" fill="#c0c0c0"/><rect x="11" y="13" width="1" height="1" fill="#a0a0a0"/><rect x="12" y="13" width="4" height="1" fill="#000"/><rect x="0" y="14" width="5" height="1" fill="#000"/><rect x="5" y="14" width="1" height="1" fill="#c0c0c0"/><rect x="6" y="14" width="3" height="1" fill="#000"/><rect x="9" y="14" width="2" height="1" fill="#c0c0c0"/><rect x="11" y="14" width="1" height="1" fill="#a0a0a0"/><rect x="12" y="14" width="4" height="1" fill="#000"/><rect x="1" y="15" width="4" height="1" fill="#000"/><rect x="5" y="15" width="7" height="1" fill="#a0a0a0"/><rect x="12" y="15" width="3" height="1" fill="#000"/></svg>
<div class="abs" style="left:8px;top:56px;width:10px;height:9px;font-size:9.5px;line-height:9px;color:#0000ff;text-align:center;-webkit-text-stroke:.3px #0000ff;">?</div>
<div class="abs" style="left:36px;top:58px;width:1px;height:11px;background:#909090;"></div>
<div class="abs" style="left:37px;top:58px;width:2px;height:11px;background:#000080;"></div>
<svg style="left:40px;top:57px" width="13" height="14" viewBox="0 0 13 14"><path d="M0.3 7L11.5 1.2V12.8Z" fill="#000080"/><path d="M0.3 7L11.5 1.2" stroke="#909090" stroke-width="1" fill="none"/></svg>
<svg style="left:61px;top:57px" width="13" height="14" viewBox="0 0 13 14"><path d="M0.3 7L11.5 1.2V12.8Z" fill="#000080"/><path d="M0.3 7L11.5 1.2" stroke="#909090" stroke-width="1" fill="none"/></svg>
<svg style="left:107px;top:57px" width="13" height="14" viewBox="0 0 13 14"><path d="M11.7 7L0.5 1.2V12.8Z" fill="#000080"/><path d="M11.7 7L0.5 1.2" stroke="#909090" stroke-width=".8" fill="none"/></svg>
<svg style="left:128px;top:57px" width="13" height="14" viewBox="0 0 13 14"><path d="M11.7 7L0.5 1.2V12.8Z" fill="#000080"/><path d="M11.7 7L0.5 1.2" stroke="#909090" stroke-width=".8" fill="none"/></svg>
<div class="abs" style="left:140px;top:58px;width:3px;height:11px;background:#000080;"></div>
<div class="abs" style="left:84px;top:56px;width:12px;height:9px;background:#00ffff;"></div>
<div class="abs" style="left:84px;top:65px;width:12px;height:7px;background:#ffff00;"></div>
<svg style="left:84px;top:56px" width="12" height="16" viewBox="0 0 12 16" shape-rendering="crispEdges"><rect x="6" y="1" width="2" height="1" fill="#000"/><rect x="6" y="2" width="2" height="1" fill="#000"/><rect x="5" y="3" width="2" height="1" fill="#000"/><rect x="4" y="4" width="3" height="1" fill="#000"/><rect x="3" y="5" width="1" height="1" fill="#000"/><rect x="5" y="5" width="3" height="1" fill="#000"/><rect x="2" y="6" width="1" height="1" fill="#000"/><rect x="5" y="6" width="2" height="1" fill="#000"/><rect x="8" y="6" width="1" height="1" fill="#000"/><rect x="5" y="7" width="2" height="1" fill="#000"/><rect x="5" y="8" width="3" height="1" fill="#000"/><rect x="4" y="9" width="2" height="1" fill="#000"/><rect x="7" y="9" width="2" height="1" fill="#000"/><rect x="4" y="10" width="1" height="1" fill="#000"/><rect x="8" y="10" width="2" height="1" fill="#000"/><rect x="3" y="11" width="2" height="1" fill="#000"/><rect x="9" y="11" width="2" height="1" fill="#000"/><rect x="2" y="12" width="2" height="1" fill="#000"/><rect x="10" y="12" width="1" height="1" fill="#000"/><rect x="2" y="13" width="1" height="1" fill="#000"/></svg>
<svg style="left:186px;top:56px" width="9" height="8" viewBox="0 0 9 8" shape-rendering="crispEdges"><rect x="0" y="0" width="1" height="1" fill="#000"/><rect x="1" y="0" width="6" height="1" fill="#0000ff"/><rect x="7" y="0" width="1" height="1" fill="#000"/><rect x="0" y="1" width="1" height="1" fill="#000"/><rect x="1" y="1" width="6" height="1" fill="#fff"/><rect x="7" y="1" width="2" height="1" fill="#000"/><rect x="0" y="2" width="1" height="1" fill="#000"/><rect x="1" y="2" width="6" height="1" fill="#fff"/><rect x="7" y="2" width="2" height="1" fill="#000"/><rect x="0" y="3" width="9" height="1" fill="#000"/><rect x="0" y="4" width="9" height="1" fill="#000"/><rect x="0" y="5" width="2" height="1" fill="#000"/><rect x="2" y="5" width="5" height="1" fill="#c0c0c0"/><rect x="7" y="5" width="2" height="1" fill="#000"/><rect x="0" y="6" width="2" height="1" fill="#000"/><rect x="2" y="6" width="1" height="1" fill="#c0c0c0"/><rect x="3" y="6" width="2" height="1" fill="#000"/><rect x="5" y="6" width="2" height="1" fill="#c0c0c0"/><rect x="7" y="6" width="2" height="1" fill="#000"/><rect x="0" y="7" width="2" height="1" fill="#000"/><rect x="2" y="7" width="1" height="1" fill="#c0c0c0"/><rect x="3" y="7" width="2" height="1" fill="#000"/><rect x="5" y="7" width="2" height="1" fill="#c0c0c0"/><rect x="7" y="7" width="2" height="1" fill="#000"/></svg>
<svg style="left:194px;top:57px" width="9" height="8" viewBox="0 0 9 8" shape-rendering="crispEdges"><rect x="0" y="0" width="6" height="1" fill="#ff0000"/><rect x="1" y="1" width="6" height="1" fill="#ff0000"/><rect x="3" y="2" width="3" height="1" fill="#ff0000"/><rect x="3" y="3" width="3" height="1" fill="#ff0000"/><rect x="1" y="4" width="8" height="1" fill="#ff0000"/><rect x="2" y="5" width="6" height="1" fill="#ff0000"/><rect x="3" y="6" width="4" height="1" fill="#ff0000"/><rect x="4" y="7" width="2" height="1" fill="#ff0000"/></svg>
<svg style="left:192px;top:64px" width="10" height="8" viewBox="0 0 10 8" shape-rendering="crispEdges"><rect x="1" y="0" width="8" height="1" fill="#000"/><rect x="0" y="1" width="1" height="1" fill="#000"/><rect x="1" y="1" width="2" height="1" fill="#ffff00"/><rect x="3" y="1" width="4" height="1" fill="#000"/><rect x="7" y="1" width="2" height="1" fill="#ffff00"/><rect x="9" y="1" width="1" height="1" fill="#000"/><rect x="0" y="2" width="1" height="1" fill="#000"/><rect x="1" y="2" width="1" height="1" fill="#ffff00"/><rect x="2" y="2" width="1" height="1" fill="#000"/><rect x="3" y="2" width="4" height="1" fill="#fff"/><rect x="7" y="2" width="1" height="1" fill="#000"/><rect x="8" y="2" width="1" height="1" fill="#ffff00"/><rect x="9" y="2" width="1" height="1" fill="#000"/><rect x="0" y="3" width="1" height="1" fill="#000"/><rect x="1" y="3" width="1" height="1" fill="#ffff00"/><rect x="2" y="3" width="6" height="1" fill="#fff"/><rect x="8" y="3" width="1" height="1" fill="#ffff00"/><rect x="9" y="3" width="1" height="1" fill="#000"/><rect x="0" y="4" width="1" height="1" fill="#000"/><rect x="1" y="4" width="1" height="1" fill="#ffff00"/><rect x="2" y="4" width="6" height="1" fill="#fff"/><rect x="8" y="4" width="1" height="1" fill="#ffff00"/><rect x="9" y="4" width="1" height="1" fill="#000"/><rect x="0" y="5" width="1" height="1" fill="#000"/><rect x="1" y="5" width="1" height="1" fill="#ffff00"/><rect x="2" y="5" width="6" height="1" fill="#fff"/><rect x="8" y="5" width="1" height="1" fill="#ffff00"/><rect x="9" y="5" width="1" height="1" fill="#000"/><rect x="0" y="6" width="1" height="1" fill="#000"/><rect x="1" y="6" width="1" height="1" fill="#ffff00"/><rect x="2" y="6" width="6" height="1" fill="#fff"/><rect x="8" y="6" width="1" height="1" fill="#ffff00"/><rect x="9" y="6" width="1" height="1" fill="#000"/><rect x="0" y="7" width="1" height="1" fill="#000"/><rect x="1" y="7" width="1" height="1" fill="#ffff00"/><rect x="2" y="7" width="6" height="1" fill="#fff"/><rect x="8" y="7" width="1" height="1" fill="#ffff00"/><rect x="9" y="7" width="1" height="1" fill="#000"/></svg>
<svg style="left:209px;top:56px" width="10" height="13" viewBox="0 0 10 13" shape-rendering="crispEdges"><rect x="1" y="0" width="8" height="1" fill="#000"/><rect x="0" y="1" width="1" height="1" fill="#000"/><rect x="1" y="1" width="2" height="1" fill="#ffff00"/><rect x="3" y="1" width="4" height="1" fill="#000"/><rect x="7" y="1" width="2" height="1" fill="#ffff00"/><rect x="9" y="1" width="1" height="1" fill="#000"/><rect x="0" y="2" width="1" height="1" fill="#000"/><rect x="1" y="2" width="1" height="1" fill="#ffff00"/><rect x="2" y="2" width="1" height="1" fill="#000"/><rect x="3" y="2" width="4" height="1" fill="#fff"/><rect x="7" y="2" width="1" height="1" fill="#000"/><rect x="8" y="2" width="1" height="1" fill="#ffff00"/><rect x="9" y="2" width="1" height="1" fill="#000"/><rect x="0" y="3" width="1" height="1" fill="#000"/><rect x="1" y="3" width="2" height="1" fill="#ffff00"/><rect x="3" y="3" width="5" height="1" fill="#fff"/><rect x="8" y="3" width="1" height="1" fill="#ffff00"/><rect x="9" y="3" width="1" height="1" fill="#000"/><rect x="0" y="4" width="1" height="1" fill="#000"/><rect x="1" y="4" width="2" height="1" fill="#ffff00"/><rect x="3" y="4" width="5" height="1" fill="#fff"/><rect x="8" y="4" width="1" height="1" fill="#ffff00"/><rect x="9" y="4" width="1" height="1" fill="#000"/><rect x="0" y="5" width="1" height="1" fill="#000"/><rect x="1" y="5" width="2" height="1" fill="#ffff00"/><rect x="3" y="5" width="5" height="1" fill="#fff"/><rect x="8" y="5" width="1" height="1" fill="#ffff00"/><rect x="9" y="5" width="1" height="1" fill="#000"/><rect x="0" y="6" width="1" height="1" fill="#000"/><rect x="1" y="6" width="2" height="1" fill="#ffff00"/><rect x="3" y="6" width="5" height="1" fill="#fff"/><rect x="8" y="6" width="1" height="1" fill="#ffff00"/><rect x="9" y="6" width="1" height="1" fill="#000"/><rect x="0" y="7" width="1" height="1" fill="#000"/><rect x="1" y="7" width="2" height="1" fill="#ffff00"/><rect x="3" y="7" width="5" height="1" fill="#fff"/><rect x="8" y="7" width="1" height="1" fill="#ffff00"/><rect x="9" y="7" width="1" height="1" fill="#000"/><rect x="0" y="8" width="1" height="1" fill="#000"/><rect x="1" y="8" width="2" height="1" fill="#ffff00"/><rect x="3" y="8" width="5" height="1" fill="#fff"/><rect x="8" y="8" width="1" height="1" fill="#ffff00"/><rect x="9" y="8" width="1" height="1" fill="#000"/><rect x="0" y="9" width="1" height="1" fill="#000"/><rect x="1" y="9" width="2" height="1" fill="#ffff00"/><rect x="3" y="9" width="5" height="1" fill="#fff"/><rect x="8" y="9" width="1" height="1" fill="#ffff00"/><rect x="9" y="9" width="1" height="1" fill="#000"/><rect x="0" y="10" width="1" height="1" fill="#000"/><rect x="1" y="10" width="8" height="1" fill="#ffff00"/><rect x="9" y="10" width="1" height="1" fill="#000"/><rect x="0" y="11" width="1" height="1" fill="#000"/><rect x="1" y="11" width="8" height="1" fill="#ffff00"/><rect x="9" y="11" width="1" height="1" fill="#000"/><rect x="1" y="12" width="8" height="1" fill="#000"/></svg>
<svg style="left:217px;top:57px" width="9" height="8" viewBox="0 0 9 8" shape-rendering="crispEdges"><rect x="0" y="0" width="6" height="1" fill="#ff0000"/><rect x="1" y="1" width="6" height="1" fill="#ff0000"/><rect x="3" y="2" width="3" height="1" fill="#ff0000"/><rect x="3" y="3" width="3" height="1" fill="#ff0000"/><rect x="1" y="4" width="8" height="1" fill="#ff0000"/><rect x="2" y="5" width="6" height="1" fill="#ff0000"/><rect x="3" y="6" width="4" height="1" fill="#ff0000"/><rect x="4" y="7" width="2" height="1" fill="#ff0000"/></svg>
<svg style="left:217px;top:64px" width="9" height="8" viewBox="0 0 9 8" shape-rendering="crispEdges"><rect x="0" y="0" width="1" height="1" fill="#000"/><rect x="1" y="0" width="6" height="1" fill="#0000ff"/><rect x="7" y="0" width="1" height="1" fill="#000"/><rect x="0" y="1" width="1" height="1" fill="#000"/><rect x="1" y="1" width="6" height="1" fill="#fff"/><rect x="7" y="1" width="2" height="1" fill="#000"/><rect x="0" y="2" width="1" height="1" fill="#000"/><rect x="1" y="2" width="6" height="1" fill="#fff"/><rect x="7" y="2" width="2" height="1" fill="#000"/><rect x="0" y="3" width="9" height="1" fill="#000"/><rect x="0" y="4" width="9" height="1" fill="#000"/><rect x="0" y="5" width="2" height="1" fill="#000"/><rect x="2" y="5" width="5" height="1" fill="#c0c0c0"/><rect x="7" y="5" width="2" height="1" fill="#000"/><rect x="0" y="6" width="2" height="1" fill="#000"/><rect x="2" y="6" width="1" height="1" fill="#c0c0c0"/><rect x="3" y="6" width="2" height="1" fill="#000"/><rect x="5" y="6" width="2" height="1" fill="#c0c0c0"/><rect x="7" y="6" width="2" height="1" fill="#000"/><rect x="0" y="7" width="2" height="1" fill="#000"/><rect x="2" y="7" width="1" height="1" fill="#c0c0c0"/><rect x="3" y="7" width="2" height="1" fill="#000"/><rect x="5" y="7" width="2" height="1" fill="#c0c0c0"/><rect x="7" y="7" width="2" height="1" fill="#000"/></svg>
<div class="abs" style="left:232px;top:56px;width:10px;font-size:5.6px;line-height:4.8px;font-weight:bold;color:#000080;-webkit-text-stroke:.35px #000080;letter-spacing:-.2px;">011<br>101</div>
<svg style="left:240px;top:57px" width="9" height="8" viewBox="0 0 9 8" shape-rendering="crispEdges"><rect x="0" y="0" width="6" height="1" fill="#ff0000"/><rect x="1" y="1" width="6" height="1" fill="#ff0000"/><rect x="3" y="2" width="3" height="1" fill="#ff0000"/><rect x="3" y="3" width="3" height="1" fill="#ff0000"/><rect x="1" y="4" width="8" height="1" fill="#ff0000"/><rect x="2" y="5" width="6" height="1" fill="#ff0000"/><rect x="3" y="6" width="4" height="1" fill="#ff0000"/><rect x="4" y="7" width="2" height="1" fill="#ff0000"/></svg>
<svg style="left:240px;top:64px" width="9" height="8" viewBox="0 0 9 8" shape-rendering="crispEdges"><rect x="0" y="0" width="1" height="1" fill="#000"/><rect x="1" y="0" width="6" height="1" fill="#0000ff"/><rect x="7" y="0" width="1" height="1" fill="#000"/><rect x="0" y="1" width="1" height="1" fill="#000"/><rect x="1" y="1" width="6" height="1" fill="#fff"/><rect x="7" y="1" width="2" height="1" fill="#000"/><rect x="0" y="2" width="1" height="1" fill="#000"/><rect x="1" y="2" width="6" height="1" fill="#fff"/><rect x="7" y="2" width="2" height="1" fill="#000"/><rect x="0" y="3" width="9" height="1" fill="#000"/><rect x="0" y="4" width="9" height="1" fill="#000"/><rect x="0" y="5" width="2" height="1" fill="#000"/><rect x="2" y="5" width="5" height="1" fill="#c0c0c0"/><rect x="7" y="5" width="2" height="1" fill="#000"/><rect x="0" y="6" width="2" height="1" fill="#000"/><rect x="2" y="6" width="1" height="1" fill="#c0c0c0"/><rect x="3" y="6" width="2" height="1" fill="#000"/><rect x="5" y="6" width="2" height="1" fill="#c0c0c0"/><rect x="7" y="6" width="2" height="1" fill="#000"/><rect x="0" y="7" width="2" height="1" fill="#000"/><rect x="2" y="7" width="1" height="1" fill="#c0c0c0"/><rect x="3" y="7" width="2" height="1" fill="#000"/><rect x="5" y="7" width="2" height="1" fill="#c0c0c0"/><rect x="7" y="7" width="2" height="1" fill="#000"/></svg>
<svg style="left:274px;top:56px" width="16" height="16" viewBox="0 0 16 16" shape-rendering="crispEdges"><rect x="6" y="0" width="8" height="1" fill="#000"/><rect x="2" y="1" width="1" height="1" fill="#000"/><rect x="3" y="1" width="1" height="1" fill="#ff0000"/><rect x="6" y="1" width="1" height="1" fill="#000"/><rect x="7" y="1" width="5" height="1" fill="#fff"/><rect x="12" y="1" width="1" height="1" fill="#000"/><rect x="13" y="1" width="1" height="1" fill="#fff"/><rect x="14" y="1" width="1" height="1" fill="#000"/><rect x="2" y="2" width="1" height="1" fill="#000"/><rect x="3" y="2" width="1" height="1" fill="#ffff00"/><rect x="4" y="2" width="1" height="1" fill="#000"/><rect x="6" y="2" width="1" height="1" fill="#000"/><rect x="7" y="2" width="1" height="1" fill="#fff"/><rect x="8" y="2" width="2" height="1" fill="#000"/><rect x="10" y="2" width="2" height="1" fill="#fff"/><rect x="12" y="2" width="1" height="1" fill="#000"/><rect x="13" y="2" width="2" height="1" fill="#fff"/><rect x="15" y="2" width="1" height="1" fill="#000"/><rect x="3" y="3" width="1" height="1" fill="#000"/><rect x="4" y="3" width="1" height="1" fill="#ffff00"/><rect x="5" y="3" width="2" height="1" fill="#000"/><rect x="7" y="3" width="5" height="1" fill="#fff"/><rect x="12" y="3" width="4" height="1" fill="#000"/><rect x="4" y="4" width="1" height="1" fill="#000"/><rect x="5" y="4" width="1" height="1" fill="#ffff00"/><rect x="6" y="4" width="1" height="1" fill="#000"/><rect x="7" y="4" width="8" height="1" fill="#fff"/><rect x="15" y="4" width="1" height="1" fill="#000"/><rect x="4" y="5" width="2" height="1" fill="#000"/><rect x="6" y="5" width="1" height="1" fill="#ffff00"/><rect x="7" y="5" width="1" height="1" fill="#000"/><rect x="8" y="5" width="2" height="1" fill="#fff"/><rect x="10" y="5" width="2" height="1" fill="#000"/><rect x="12" y="5" width="3" height="1" fill="#fff"/><rect x="15" y="5" width="1" height="1" fill="#000"/><rect x="1" y="6" width="4" height="1" fill="#000"/><rect x="5" y="6" width="1" height="1" fill="#ffff00"/><rect x="6" y="6" width="1" height="1" fill="#000"/><rect x="7" y="6" width="1" height="1" fill="#ffff00"/><rect x="8" y="6" width="1" height="1" fill="#000"/><rect x="9" y="6" width="6" height="1" fill="#fff"/><rect x="15" y="6" width="1" height="1" fill="#000"/><rect x="0" y="7" width="1" height="1" fill="#00ffff"/><rect x="1" y="7" width="1" height="1" fill="#000"/><rect x="2" y="7" width="1" height="1" fill="#ffff00"/><rect x="3" y="7" width="1" height="1" fill="#fff"/><rect x="4" y="7" width="1" height="1" fill="#ffff00"/><rect x="5" y="7" width="1" height="1" fill="#fff"/><rect x="6" y="7" width="2" height="1" fill="#000"/><rect x="8" y="7" width="1" height="1" fill="#ffff00"/><rect x="9" y="7" width="1" height="1" fill="#000"/><rect x="10" y="7" width="5" height="1" fill="#fff"/><rect x="15" y="7" width="1" height="1" fill="#000"/><rect x="0" y="8" width="1" height="1" fill="#00ffff"/><rect x="1" y="8" width="1" height="1" fill="#000"/><rect x="2" y="8" width="1" height="1" fill="#fff"/><rect x="3" y="8" width="1" height="1" fill="#ffff00"/><rect x="4" y="8" width="1" height="1" fill="#fff"/><rect x="5" y="8" width="1" height="1" fill="#ffff00"/><rect x="6" y="8" width="1" height="1" fill="#fff"/><rect x="7" y="8" width="1" height="1" fill="#ffff00"/><rect x="8" y="8" width="1" height="1" fill="#000"/><rect x="9" y="8" width="1" height="1" fill="#ffff00"/><rect x="10" y="8" width="3" height="1" fill="#000"/><rect x="13" y="8" width="2" height="1" fill="#fff"/><rect x="15" y="8" width="1" height="1" fill="#000"/><rect x="0" y="9" width="1" height="1" fill="#00ffff"/><rect x="1" y="9" width="1" height="1" fill="#000"/><rect x="2" y="9" width="1" height="1" fill="#ffff00"/><rect x="3" y="9" width="1" height="1" fill="#fff"/><rect x="4" y="9" width="1" height="1" fill="#ffff00"/><rect x="5" y="9" width="1" height="1" fill="#fff"/><rect x="6" y="9" width="1" height="1" fill="#ffff00"/><rect x="7" y="9" width="2" height="1" fill="#000"/><rect x="9" y="9" width="6" height="1" fill="#fff"/><rect x="15" y="9" width="1" height="1" fill="#000"/><rect x="0" y="10" width="1" height="1" fill="#00ffff"/><rect x="1" y="10" width="1" height="1" fill="#000"/><rect x="2" y="10" width="1" height="1" fill="#fff"/><rect x="3" y="10" width="1" height="1" fill="#ffff00"/><rect x="4" y="10" width="1" height="1" fill="#fff"/><rect x="5" y="10" width="1" height="1" fill="#ffff00"/><rect x="6" y="10" width="1" height="1" fill="#000"/><rect x="7" y="10" width="1" height="1" fill="#ffff00"/><rect x="8" y="10" width="1" height="1" fill="#000"/><rect x="9" y="10" width="2" height="1" fill="#fff"/><rect x="11" y="10" width="1" height="1" fill="#000"/><rect x="12" y="10" width="3" height="1" fill="#fff"/><rect x="15" y="10" width="1" height="1" fill="#000"/><rect x="0" y="11" width="1" height="1" fill="#00ffff"/><rect x="1" y="11" width="1" height="1" fill="#000"/><rect x="2" y="11" width="1" height="1" fill="#ffff00"/><rect x="3" y="11" width="1" height="1" fill="#fff"/><rect x="4" y="11" width="1" height="1" fill="#ffff00"/><rect x="5" y="11" width="1" height="1" fill="#fff"/><rect x="6" y="11" width="1" height="1" fill="#ffff00"/><rect x="7" y="11" width="1" height="1" fill="#000"/><rect x="8" y="11" width="7" height="1" fill="#fff"/><rect x="15" y="11" width="1" height="1" fill="#000"/><rect x="0" y="12" width="1" height="1" fill="#00ffff"/><rect x="1" y="12" width="2" height="1" fill="#000"/><rect x="3" y="12" width="1" height="1" fill="#ffff00"/><rect x="4" y="12" width="1" height="1" fill="#fff"/><rect x="5" y="12" width="1" height="1" fill="#ffff00"/><rect x="6" y="12" width="1" height="1" fill="#000"/><rect x="7" y="12" width="1" height="1" fill="#fff"/><rect x="8" y="12" width="2" height="1" fill="#000"/><rect x="10" y="12" width="1" height="1" fill="#fff"/><rect x="11" y="12" width="2" height="1" fill="#000"/><rect x="13" y="12" width="2" height="1" fill="#fff"/><rect x="15" y="12" width="1" height="1" fill="#000"/><rect x="1" y="13" width="6" height="1" fill="#000"/><rect x="7" y="13" width="8" height="1" fill="#fff"/><rect x="15" y="13" width="1" height="1" fill="#000"/><rect x="6" y="14" width="1" height="1" fill="#000"/><rect x="7" y="14" width="8" height="1" fill="#fff"/><rect x="15" y="14" width="1" height="1" fill="#000"/><rect x="6" y="15" width="10" height="1" fill="#000"/></svg>
<svg style="left:296px;top:56px" width="18" height="16" viewBox="0 0 18 16"><path d="M1.8 8L4.2 6.6L6.8 10.2L15.2 2L17 2.4L8.4 13.2L7 14.6L5.4 14.2Z" fill="#fff"/><path d="M1 7.2L3.4 5.8L6 9.4L14.4 1.2L16.2 1.6L7.6 12.4L6.2 13.8L4.6 13.4Z" fill="#a0a0a0"/></svg>
<svg style="left:321px;top:56px" width="16" height="16" viewBox="0 0 16 16"><path d="M3 3.5L13.5 14.5M13.5 3.5L3 14.5" stroke="#fff" stroke-width="3.6" fill="none"/><path d="M2.2 2.7L12.7 13.7M12.7 2.7L2.2 13.7" stroke="#a0a0a0" stroke-width="3.8" fill="none"/></svg>
<svg style="left:344px;top:57px" width="14" height="14" viewBox="0 0 14 14" shape-rendering="crispEdges"><rect x="7" y="0" width="6" height="1" fill="#000"/><rect x="7" y="1" width="1" height="1" fill="#000"/><rect x="8" y="1" width="4" height="1" fill="#00ff00"/><rect x="12" y="1" width="1" height="1" fill="#000"/><rect x="2" y="2" width="3" height="1" fill="#000"/><rect x="7" y="2" width="1" height="1" fill="#000"/><rect x="8" y="2" width="3" height="1" fill="#00ff00"/><rect x="11" y="2" width="1" height="1" fill="#000"/><rect x="1" y="3" width="1" height="1" fill="#000"/><rect x="2" y="3" width="3" height="1" fill="#00ff00"/><rect x="5" y="3" width="1" height="1" fill="#000"/><rect x="7" y="3" width="1" height="1" fill="#000"/><rect x="8" y="3" width="4" height="1" fill="#00ff00"/><rect x="12" y="3" width="1" height="1" fill="#000"/><rect x="1" y="4" width="1" height="1" fill="#000"/><rect x="2" y="4" width="2" height="1" fill="#00ff00"/><rect x="4" y="4" width="1" height="1" fill="#000"/><rect x="7" y="4" width="1" height="1" fill="#000"/><rect x="8" y="4" width="1" height="1" fill="#00ff00"/><rect x="9" y="4" width="1" height="1" fill="#000"/><rect x="10" y="4" width="2" height="1" fill="#00ff00"/><rect x="12" y="4" width="1" height="1" fill="#000"/><rect x="0" y="5" width="1" height="1" fill="#000"/><rect x="1" y="5" width="3" height="1" fill="#00ff00"/><rect x="4" y="5" width="1" height="1" fill="#000"/><rect x="7" y="5" width="2" height="1" fill="#000"/><rect x="10" y="5" width="1" height="1" fill="#000"/><rect x="11" y="5" width="2" height="1" fill="#00ff00"/><rect x="13" y="5" width="1" height="1" fill="#000"/><rect x="0" y="6" width="1" height="1" fill="#000"/><rect x="1" y="6" width="2" height="1" fill="#00ff00"/><rect x="3" y="6" width="1" height="1" fill="#000"/><rect x="10" y="6" width="1" height="1" fill="#000"/><rect x="11" y="6" width="2" height="1" fill="#00ff00"/><rect x="13" y="6" width="1" height="1" fill="#000"/><rect x="0" y="7" width="1" height="1" fill="#000"/><rect x="1" y="7" width="2" height="1" fill="#00ff00"/><rect x="3" y="7" width="1" height="1" fill="#000"/><rect x="10" y="7" width="1" height="1" fill="#000"/><rect x="11" y="7" width="2" height="1" fill="#00ff00"/><rect x="13" y="7" width="1" height="1" fill="#000"/><rect x="0" y="8" width="1" height="1" fill="#000"/><rect x="1" y="8" width="3" height="1" fill="#00ff00"/><rect x="4" y="8" width="1" height="1" fill="#000"/><rect x="9" y="8" width="1" height="1" fill="#000"/><rect x="10" y="8" width="3" height="1" fill="#00ff00"/><rect x="13" y="8" width="1" height="1" fill="#000"/><rect x="1" y="9" width="1" height="1" fill="#000"/><rect x="2" y="9" width="3" height="1" fill="#00ff00"/><rect x="5" y="9" width="1" height="1" fill="#000"/><rect x="8" y="9" width="1" height="1" fill="#000"/><rect x="9" y="9" width="3" height="1" fill="#00ff00"/><rect x="12" y="9" width="1" height="1" fill="#000"/><rect x="1" y="10" width="1" height="1" fill="#000"/><rect x="2" y="10" width="4" height="1" fill="#00ff00"/><rect x="6" y="10" width="2" height="1" fill="#000"/><rect x="8" y="10" width="4" height="1" fill="#00ff00"/><rect x="12" y="10" width="1" height="1" fill="#000"/><rect x="2" y="11" width="1" height="1" fill="#000"/><rect x="3" y="11" width="8" height="1" fill="#00ff00"/><rect x="11" y="11" width="1" height="1" fill="#000"/><rect x="3" y="12" width="2" height="1" fill="#000"/><rect x="5" y="12" width="4" height="1" fill="#00ff00"/><rect x="9" y="12" width="2" height="1" fill="#000"/><rect x="5" y="13" width="4" height="1" fill="#000"/></svg>
<svg style="left:373px;top:55px" width="19" height="18" viewBox="0 0 19 18"><path d="M1.5 1.5H8.5L12.5 5.5V15.5H1.5Z" fill="#f0f0f0" stroke="#a8a8a8" stroke-width="1"/><path d="M8.5 1.5V5.5H12.5" fill="none" stroke="#a8a8a8"/><circle cx="10.5" cy="10" r="3" fill="#f0f0f0" stroke="#a0a0a0" stroke-width="2"/><path d="M13 12.5L17 16.5" stroke="#a0a0a0" stroke-width="2"/></svg>
<svg style="left:650px;top:55px" width="18" height="18" viewBox="0 0 18 18"><circle cx="5.5" cy="5" r="4.2" fill="#a0a0a0"/><circle cx="9.8" cy="9.5" r="5.6" fill="#a0a0a0"/><rect x="2" y="3" width="5" height="9" fill="#a0a0a0"/><rect x="5" y="10" width="6" height="5.5" fill="#a0a0a0"/><path d="M12 13L16.5 17" stroke="#a0a0a0" stroke-width="1.6"/></svg>
<svg style="left:672px;top:55px" width="18" height="18" viewBox="0 0 18 18"><path d="M2 3.5L4.5 1.5L11.5 8.5L14.5 8L10 15.5L8 12.5Z" fill="#fff" stroke="#000" stroke-width="1.2" stroke-linejoin="round"/><path d="M11.5 8.5L14.5 8L10 15.5L8.6 13Z" fill="#ff0000"/><path d="M9.2 14.2L10 15.5L13 10.5Z" fill="#800000"/><path d="M7 4.5L9 6.5" stroke="#ff0000" stroke-width="1"/></svg>
<svg style="left:682px;top:66px" width="6" height="6" viewBox="0 0 6 6" shape-rendering="crispEdges"><rect x="2" y="0" width="1" height="1" fill="#ffff00"/><rect x="4" y="0" width="1" height="1" fill="#ffff00"/><rect x="1" y="1" width="1" height="1" fill="#ffff00"/><rect x="3" y="1" width="1" height="1" fill="#ffff00"/><rect x="5" y="1" width="1" height="1" fill="#ffff00"/><rect x="2" y="2" width="1" height="1" fill="#ffff00"/><rect x="4" y="2" width="1" height="1" fill="#ffff00"/><rect x="1" y="3" width="1" height="1" fill="#ffff00"/><rect x="3" y="3" width="1" height="1" fill="#ffff00"/><rect x="5" y="3" width="1" height="1" fill="#ffff00"/><rect x="2" y="4" width="1" height="1" fill="#ffff00"/><rect x="4" y="4" width="1" height="1" fill="#ffff00"/><rect x="1" y="5" width="1" height="1" fill="#ffff00"/><rect x="3" y="5" width="1" height="1" fill="#ffff00"/><rect x="5" y="5" width="1" height="1" fill="#ffff00"/></svg>
<svg style="left:697px;top:62px" width="7" height="4" viewBox="0 0 7 4" shape-rendering="crispEdges"><path d="M0 0h7v1h-1v1h-1v1h-1v1h-1v-1h-1v-1h-1v-1h-1z" fill="#000"/></svg>
<svg style="left:754px;top:62px" width="7" height="4" viewBox="0 0 7 4" shape-rendering="crispEdges"><path d="M0 0h7v1h-1v1h-1v1h-1v1h-1v-1h-1v-1h-1v-1h-1z" fill="#000"/></svg>
<svg style="left:792px;top:62px" width="7" height="4" viewBox="0 0 7 4" shape-rendering="crispEdges"><path d="M0 0h7v1h-1v1h-1v1h-1v1h-1v-1h-1v-1h-1v-1h-1z" fill="#a0a0a0"/></svg>
<div class="abs" style="left:798px;top:55px;width:2px;height:20px;background:#49b8c9;"></div>
<svg style="left:730px;top:57px" width="16" height="15" viewBox="0 0 16 15"><path d="M0.8 7.5L8 1V5H15V10H8V14Z" fill="#0000ff"/></svg>
<svg style="left:768px;top:57px" width="16" height="15" viewBox="0 0 16 15"><path d="M15.2 7.5L8 1V5H1V10H8V14Z" fill="#a0a0a0"/></svg>
<svg style="left:49px;top:523.5px" width="16" height="16" viewBox="0 0 16 16"><circle cx="8" cy="8" r="7.8" fill="#000"/><circle cx="8" cy="8" r="6.7" fill="#ffff00"/><circle cx="8.8" cy="8" r="4.3" stroke="#000" stroke-width="1.25" fill="none"/><circle cx="9" cy="8" r="1.9" stroke="#000" stroke-width="1.2" fill="none"/><path d="M8.6 8L3.4 3A7 7 0 0 0 1.2 8Z" fill="#000050"/><path d="M8.6 8H1.2A7 7 0 0 0 4.6 13.8Z" fill="#0000ff"/><path d="M2 8H8" stroke="#e0e000" stroke-width=".8" stroke-dasharray="1.6 1"/></svg>
<svg style="left:69px;top:523.5px" width="16" height="16" viewBox="0 0 16 16"><circle cx="8" cy="8" r="7.8" fill="#000"/><circle cx="8" cy="8" r="6.7" fill="#ffff00"/><circle cx="8.8" cy="8" r="4.3" stroke="#000" stroke-width="1.25" fill="none"/><circle cx="9" cy="8" r="1.9" stroke="#000" stroke-width="1.2" fill="none"/><path d="M8.6 8L3.4 3A7 7 0 0 0 1.2 8Z" fill="#000050"/><path d="M8.6 8H1.2A7 7 0 0 0 4.6 13.8Z" fill="#0000ff"/><path d="M2 8H8" stroke="#e0e000" stroke-width=".8" stroke-dasharray="1.6 1"/></svg>
<div class="abs" style="left:89px;top:523px;font-size:9.5px;line-height:9px;color:#000080;letter-spacing:-.6px;">32</div>
<svg style="left:91px;top:524px" width="13" height="16" viewBox="0 0 13 16" shape-rendering="crispEdges"><rect x="7" y="0" width="1" height="1" fill="#000"/><rect x="8" y="0" width="2" height="1" fill="#a0a0a0"/><rect x="10" y="0" width="1" height="1" fill="#800000"/><rect x="11" y="0" width="1" height="1" fill="#000"/><rect x="7" y="1" width="1" height="1" fill="#800000"/><rect x="8" y="1" width="2" height="1" fill="#a0a0a0"/><rect x="10" y="1" width="2" height="1" fill="#800000"/><rect x="7" y="2" width="1" height="1" fill="#800000"/><rect x="8" y="2" width="2" height="1" fill="#a0a0a0"/><rect x="10" y="2" width="2" height="1" fill="#800000"/><rect x="7" y="3" width="5" height="1" fill="#800000"/><rect x="8" y="4" width="4" height="1" fill="#800000"/><rect x="8" y="5" width="4" height="1" fill="#800000"/><rect x="8" y="6" width="4" height="1" fill="#800000"/><rect x="8" y="7" width="4" height="1" fill="#800000"/><rect x="8" y="8" width="4" height="1" fill="#800000"/><rect x="7" y="9" width="5" height="1" fill="#800000"/><rect x="6" y="10" width="2" height="1" fill="#800000"/><rect x="8" y="10" width="1" height="1" fill="#808000"/><rect x="9" y="10" width="2" height="1" fill="#00a000"/><rect x="11" y="10" width="2" height="1" fill="#ffff00"/><rect x="5" y="11" width="4" height="1" fill="#800000"/><rect x="9" y="11" width="1" height="1" fill="#00a000"/><rect x="10" y="11" width="2" height="1" fill="#800000"/><rect x="3" y="12" width="9" height="1" fill="#800000"/><rect x="1" y="13" width="7" height="1" fill="#800000"/><rect x="8" y="13" width="1" height="1" fill="#000"/><rect x="9" y="13" width="3" height="1" fill="#800000"/><rect x="0" y="14" width="1" height="1" fill="#000"/><rect x="1" y="14" width="6" height="1" fill="#800000"/><rect x="7" y="14" width="1" height="1" fill="#000"/><rect x="9" y="14" width="1" height="1" fill="#000"/><rect x="10" y="14" width="2" height="1" fill="#800000"/><rect x="0" y="15" width="7" height="1" fill="#000"/><rect x="9" y="15" width="3" height="1" fill="#000"/></svg>
<svg style="left:109px;top:524px" width="16" height="16" viewBox="0 0 16 16" shape-rendering="crispEdges"><rect x="1" y="0" width="3" height="1" fill="#000"/><rect x="0" y="1" width="1" height="1" fill="#000"/><rect x="1" y="1" width="3" height="1" fill="#ffff00"/><rect x="4" y="1" width="2" height="1" fill="#000"/><rect x="0" y="2" width="1" height="1" fill="#000"/><rect x="1" y="2" width="4" height="1" fill="#ffff00"/><rect x="5" y="2" width="1" height="1" fill="#000"/><rect x="0" y="3" width="1" height="1" fill="#000"/><rect x="1" y="3" width="4" height="1" fill="#ffff00"/><rect x="5" y="3" width="3" height="1" fill="#000"/><rect x="9" y="3" width="2" height="1" fill="#000"/><rect x="12" y="3" width="2" height="1" fill="#000"/><rect x="0" y="4" width="6" height="1" fill="#000"/><rect x="1" y="5" width="1" height="1" fill="#000"/><rect x="5" y="5" width="2" height="1" fill="#000"/><rect x="1" y="6" width="1" height="1" fill="#000"/><rect x="4" y="6" width="1" height="1" fill="#000"/><rect x="5" y="6" width="2" height="1" fill="#ffff00"/><rect x="7" y="6" width="2" height="1" fill="#000"/><rect x="1" y="7" width="4" height="1" fill="#000"/><rect x="5" y="7" width="3" height="1" fill="#ffff00"/><rect x="8" y="7" width="1" height="1" fill="#000"/><rect x="1" y="8" width="1" height="1" fill="#000"/><rect x="4" y="8" width="1" height="1" fill="#000"/><rect x="5" y="8" width="3" height="1" fill="#ffff00"/><rect x="8" y="8" width="2" height="1" fill="#000"/><rect x="11" y="8" width="2" height="1" fill="#000"/><rect x="14" y="8" width="2" height="1" fill="#000"/><rect x="1" y="9" width="1" height="1" fill="#000"/><rect x="4" y="9" width="5" height="1" fill="#000"/><rect x="1" y="10" width="1" height="1" fill="#000"/><rect x="5" y="10" width="2" height="1" fill="#000"/><rect x="1" y="11" width="1" height="1" fill="#000"/><rect x="4" y="11" width="1" height="1" fill="#000"/><rect x="5" y="11" width="2" height="1" fill="#ffff00"/><rect x="7" y="11" width="2" height="1" fill="#000"/><rect x="1" y="12" width="4" height="1" fill="#000"/><rect x="5" y="12" width="3" height="1" fill="#ffff00"/><rect x="8" y="12" width="1" height="1" fill="#000"/><rect x="1" y="13" width="1" height="1" fill="#000"/><rect x="4" y="13" width="1" height="1" fill="#000"/><rect x="5" y="13" width="3" height="1" fill="#ffff00"/><rect x="8" y="13" width="2" height="1" fill="#000"/><rect x="11" y="13" width="2" height="1" fill="#000"/><rect x="14" y="13" width="2" height="1" fill="#000"/><rect x="1" y="14" width="1" height="1" fill="#000"/><rect x="4" y="14" width="5" height="1" fill="#000"/><rect x="1" y="15" width="1" height="1" fill="#000"/></svg>
</body></html>
